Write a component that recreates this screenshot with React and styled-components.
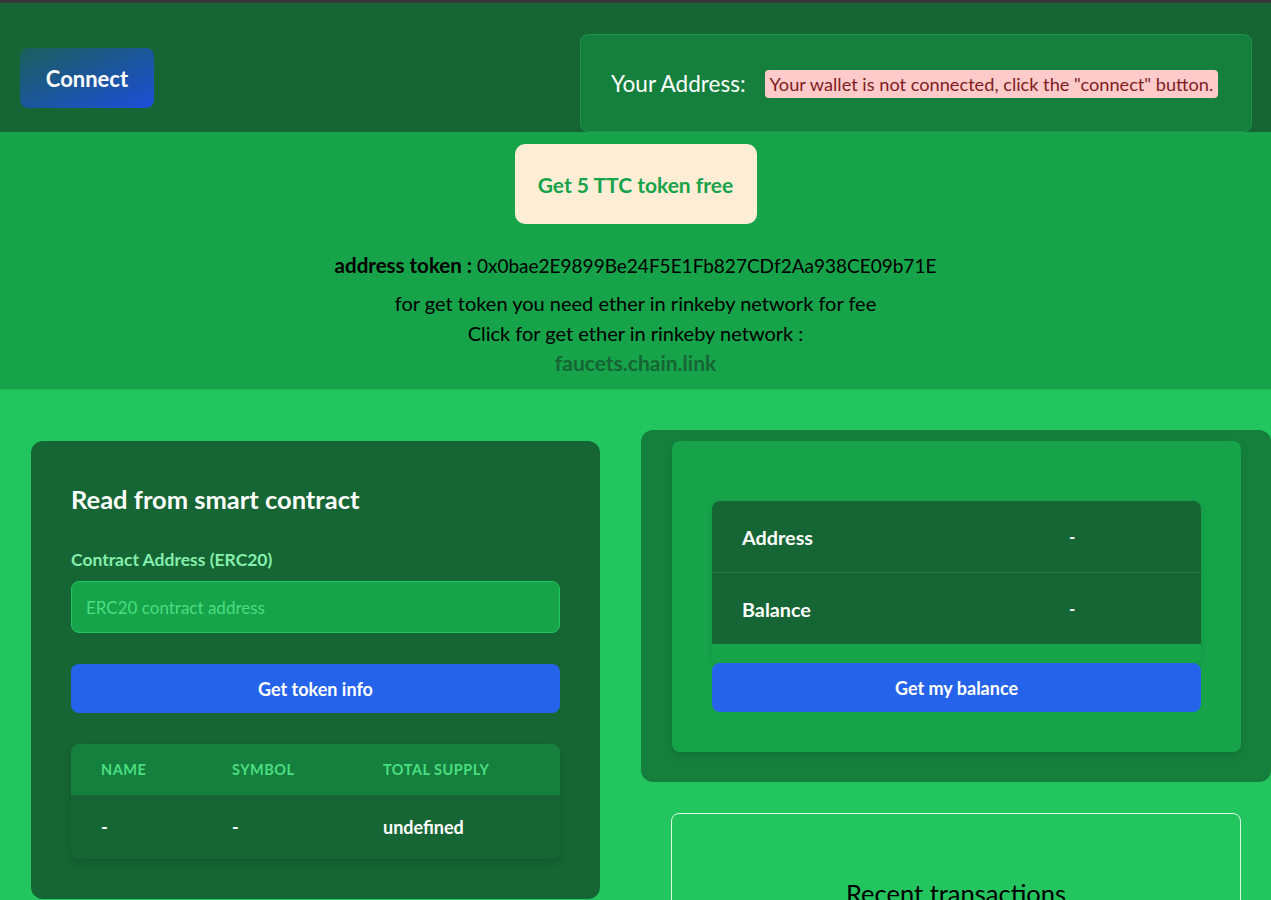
import React from 'react'
import styled, { createGlobalStyle } from 'styled-components'

const GlobalStyle = createGlobalStyle`
  html, body {
    margin: 0;
    padding: 0;
    background: #22c55e;
    font-family: Lato, "Open Sans", "Liberation Sans", sans-serif;
    overflow-x: hidden;
  }
  * { box-sizing: border-box; }
`

function App() {
  return (
    <>
      <GlobalStyle />
      <TopStrip />
      <Header>
        <ConnectButton>Connect</ConnectButton>
        <AddressPanel>
          <AddressLabel>Your Address:</AddressLabel>
          <WarnPill>Your wallet is not connected, click the "connect" button.</WarnPill>
        </AddressPanel>
      </Header>

      <FaucetSection>
        <FreeButton>Get 5 TTC token free</FreeButton>
        <TokenLine>
          <b>address token :</b> 0x0bae2E9899Be24F5E1Fb827CDf2Aa938CE09b71E
        </TokenLine>
        <InfoLine>for get token you need ether in rinkeby network for fee</InfoLine>
        <InfoLine>Click for get ether in rinkeby network :</InfoLine>
        <FaucetLink>faucets.chain.link</FaucetLink>
      </FaucetSection>

      <Main>
        <LeftCol>
          <ReadCard>
            <CardTitle>Read from smart contract</CardTitle>
            <FieldLabel>Contract Address (ERC20)</FieldLabel>
            <AddressInput placeholder="ERC20 contract address" />
            <BlueButton $height={49}>Get token info</BlueButton>
            <TokenTable>
              <TableHead>
                <HeadCell>Name</HeadCell>
                <HeadCell>Symbol</HeadCell>
                <HeadCell>Total supply</HeadCell>
              </TableHead>
              <TableRow>
                <BodyCell>-</BodyCell>
                <BodyCell>-</BodyCell>
                <BodyCell>undefined</BodyCell>
              </TableRow>
            </TokenTable>
          </ReadCard>
        </LeftCol>

        <RightCol>
          <BalanceOuter>
            <BalanceInner>
              <InfoTable>
                <InfoRow>
                  <InfoKey>Address</InfoKey>
                  <InfoValue>-</InfoValue>
                </InfoRow>
                <InfoRow $last>
                  <InfoKey>Balance</InfoKey>
                  <InfoValue>-</InfoValue>
                </InfoRow>
              </InfoTable>
              <BlueButton $height={49}>Get my balance</BlueButton>
            </BalanceInner>
          </BalanceOuter>
          <TxCard>
            <TxTitle>Recent transactions</TxTitle>
          </TxCard>
        </RightCol>
      </Main>
    </>
  )
}

export default App

const TopStrip = styled.div`
  height: 3px;
  background: #3a3a3c;
`

const Header = styled.header`
  display: flex;
  justify-content: space-between;
  align-items: flex-start;
  height: 129px;
  padding: 31px 19px 0 20px;
  background: #166534;
`

const ConnectButton = styled.button`
  margin-top: 14px;
  width: 134px;
  height: 60px;
  border: none;
  border-radius: 8px;
  background: linear-gradient(to bottom right, #1b5f5c, #1d4ed8);
  color: #fff;
  font-family: inherit;
  font-size: 22px;
  font-weight: 700;
`

const AddressPanel = styled.div`
  display: flex;
  align-items: center;
  gap: 19px;
  width: 672px;
  height: 98px;
  padding: 0 30px;
  background: #15803d;
  border: 1px solid #1c9447;
  border-radius: 8px;
`

const AddressLabel = styled.span`
  color: #fff;
  font-size: 22.5px;
`

const WarnPill = styled.span`
  margin-top: 2px;
  padding: 3px 5px;
  border-radius: 4px;
  background: #fecaca;
  color: #7f1d1d;
  font-size: 18.2px;
`

const FaucetSection = styled.section`
  display: flex;
  flex-direction: column;
  align-items: center;
  height: 258px;
  padding-top: 12px;
  background: #16a34a;
  border-bottom: 1px solid #1fb554;
  color: #000;
`

const FreeButton = styled.button`
  width: 242px;
  height: 80px;
  border: none;
  border-radius: 10px;
  background: #ffedd5;
  color: #16a34a;
  font-family: inherit;
  font-size: 21px;
  font-weight: 700;
  margin-bottom: 26px;
`

const TokenLine = styled.p`
  margin: 0 0 7px;
  font-size: 19px;
  line-height: 30px;
  b { font-weight: 700; font-size: 20.5px; }
`

const InfoLine = styled.p`
  margin: 0;
  font-size: 20px;
  line-height: 30px;
`

const FaucetLink = styled.a`
  font-size: 21px;
  line-height: 30px;
  font-weight: 700;
  color: #166534;
`

const Main = styled.main`
  display: flex;
  gap: 41px;
  padding-left: 31px;
  background: #22c55e;
  min-height: 520px;
`

const LeftCol = styled.div`
  width: 569px;
  padding-top: 51px;
`

const RightCol = styled.div`
  flex: 1;
  padding-top: 40px;
`

const ReadCard = styled.div`
  display: flex;
  flex-direction: column;
  padding: 41px 40px 40px 40px;
  background: #166534;
  border-radius: 12px;
`

const CardTitle = styled.h2`
  margin: 0 0 33px;
  color: #fff;
  font-size: 25.5px;
  font-weight: 700;
  line-height: 34px;
`

const FieldLabel = styled.label`
  margin-bottom: 11px;
  color: #86efac;
  font-size: 17.5px;
  font-weight: 700;
`

const AddressInput = styled.input`
  height: 52px;
  padding: 0 14px;
  margin-bottom: 31px;
  border: 1px solid #22c55e;
  border-radius: 8px;
  background: #16a34a;
  font-family: inherit;
  font-size: 17px;
  color: #fff;
  &::placeholder { color: #4ade80; }
`

const BlueButton = styled.button`
  width: 100%;
  height: ${p => p.$height}px;
  border: none;
  border-radius: 8px;
  background: #2563eb;
  color: #fff;
  font-family: inherit;
  font-size: 18px;
  font-weight: 700;
`

const TokenTable = styled.div`
  margin-top: 31px;
  border-radius: 8px;
  overflow: hidden;
  box-shadow: 0 4px 8px rgba(0, 0, 0, 0.12);
`

const TableHead = styled.div`
  display: grid;
  grid-template-columns: 131px 151px 1fr;
  height: 51px;
  align-items: center;
  padding-left: 30px;
  background: #15803d;
`

const HeadCell = styled.div`
  color: #4ade80;
  font-size: 14.5px;
  font-weight: 700;
  letter-spacing: 0.5px;
  text-transform: uppercase;
`

const TableRow = styled(TableHead)`
  height: 64px;
  background: #166534;
`

const BodyCell = styled.div`
  color: #fff;
  font-size: 18px;
  font-weight: 700;
`

const BalanceOuter = styled.div`
  padding: 11px 30px 30px 31px;
  background: #15803d;
  border-radius: 12px;
`

const BalanceInner = styled.div`
  padding: 60px 40px 40px;
  background: #16a34a;
  border-radius: 8px;
  box-shadow: 0 4px 10px rgba(0, 0, 0, 0.12);
`

const InfoTable = styled.div`
  padding-bottom: 19px;
  border-radius: 8px;
  overflow: hidden;
  box-shadow: 0 2px 6px rgba(0, 0, 0, 0.1);
`

const InfoRow = styled.div`
  display: grid;
  grid-template-columns: 327px 1fr;
  align-items: center;
  height: ${p => (p.$last ? 71 : 72)}px;
  padding-left: 30px;
  background: #166534;
  border-bottom: ${p => (p.$last ? 'none' : '1px solid #1a7a3f')};
`

const InfoKey = styled.div`
  color: #fff;
  font-size: 19.8px;
  font-weight: 700;
`

const InfoValue = styled.div`
  color: #fff;
  font-size: 17px;
  font-weight: 700;
`

const TxCard = styled.div`
  margin: 31px 30px 0;
  height: 200px;
  padding-top: 64px;
  border: 1px solid #dcfce7;
  border-radius: 8px;
  text-align: center;
`

const TxTitle = styled.h3`
  margin: 0;
  color: #000;
  font-size: 25.5px;
  font-weight: 400;
`
